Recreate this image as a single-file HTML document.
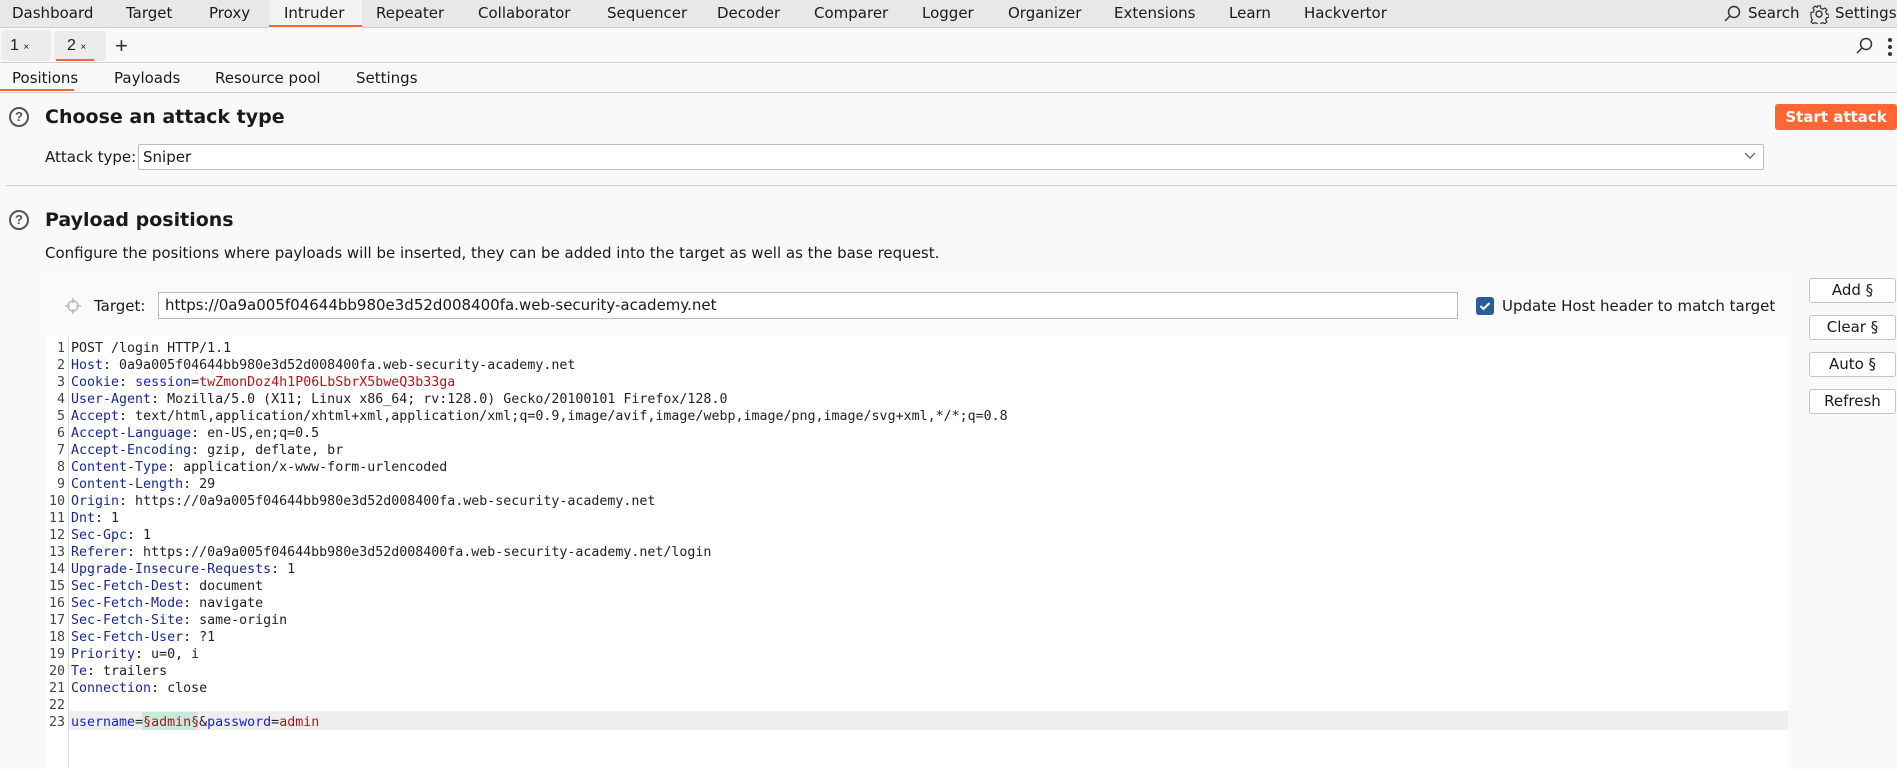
<!DOCTYPE html>
<html><head><style>
*{margin:0;padding:0;box-sizing:border-box}
body{width:1897px;height:769px;overflow:hidden;background:#f9f9f9;font-family:"Liberation Sans","DejaVu Sans",sans-serif;color:#1a1a1a;position:relative}
.abs{position:absolute;white-space:nowrap}
#nav{position:absolute;left:0;top:0;width:1897px;height:28px;background:#e8e8e8;border-bottom:1px solid #cfcfcf}
#nav span{position:absolute;top:4px;font-family:"DejaVu Sans","Liberation Sans",sans-serif;font-size:15px;z-index:2}
.mono{font-family:"DejaVu Sans Mono","Liberation Mono",monospace;font-size:13.3px}
.k{color:#1c2a8c}.b{color:#1a1ae6}.r{color:#b2151f}
.btn{position:absolute;left:1809px;width:87px;height:25px;border:1px solid #c4c4c4;border-radius:3px;background:#fff;font-size:15px;text-align:center;line-height:23px;font-family:"DejaVu Sans",sans-serif}
.help{position:absolute;width:20px;height:20px;border:2px solid #555;border-radius:50%;font-size:13px;font-weight:bold;text-align:center;line-height:16px;color:#555}
</style></head><body>
<div id="nav">
<div style="position:absolute;left:269px;top:0;width:93px;height:28px;background:#f2f2f2"></div>
<div style="position:absolute;left:269px;top:25px;width:93px;height:2px;background:#f06a35"></div>
<span style="left:12px">Dashboard</span><span style="left:126px">Target</span><span style="left:209px">Proxy</span><span style="left:284px">Intruder</span><span style="left:376px">Repeater</span><span style="left:478px">Collaborator</span><span style="left:607px">Sequencer</span><span style="left:717px">Decoder</span><span style="left:814px">Comparer</span><span style="left:922px">Logger</span><span style="left:1008px">Organizer</span><span style="left:1114px">Extensions</span><span style="left:1229px">Learn</span><span style="left:1304px">Hackvertor</span>
<span style="left:1748px">Search</span><span style="left:1835px">Settings</span>
<svg style="position:absolute;left:1723px;top:5px" width="18" height="18" viewBox="0 0 18 18"><circle cx="11" cy="7" r="5.5" fill="none" stroke="#333" stroke-width="1.5"/><path d="M7 11L2 16" stroke="#333" stroke-width="1.5"/></svg>
<svg style="position:absolute;left:1809px;top:4px" width="20" height="20" viewBox="0 0 20 20"><circle cx="10" cy="10" r="3" fill="none" stroke="#333" stroke-width="1.4"/><path d="M8.5 1.5h3l.5 2.5 2 1 2.3-1.3 2 2-1.3 2.3 1 2 2.5.5v3l-2.5.5-1 2 1.3 2.3-2 2-2.3-1.3-2 1-.5 2.5h-3l-.5-2.5-2-1-2.3 1.3-2-2 1.3-2.3-1-2L1.5 11.5v-3L4 8l1-2L3.7 3.7l2-2L8 3l.5-1.5z" fill="none" stroke="#333" stroke-width="1.3" transform="scale(.95) translate(.5 .5)"/></svg>
</div>
<span class="abs" style="left:1px;top:30px;width:50px;height:31px;background:#ececec;border-radius:3px"></span>
<span class="abs" style="left:10px;top:37px;font-size:16px">1 <small style="font-size:10px">×</small></span>
<span class="abs" style="left:54px;top:31px;width:52px;height:30px;background:#ececec;border-radius:3px"></span>
<span class="abs" style="left:67px;top:37px;font-size:16px">2 <small style="font-size:10px">×</small></span>
<span class="abs" style="left:56px;top:59px;width:38px;height:2px;background:#f06a35"></span>
<span class="abs" style="left:115px;top:33px;font-size:22px;color:#333">+</span>
<svg style="position:absolute;left:1855px;top:37px" width="18" height="18" viewBox="0 0 18 18"><circle cx="11" cy="7" r="5.5" fill="none" stroke="#333" stroke-width="1.5"/><path d="M7 11L2 16" stroke="#333" stroke-width="1.5"/></svg>
<span class="abs" style="left:1888px;top:38px;width:4px;height:4px;border-radius:50%;background:#333"></span>
<span class="abs" style="left:1888px;top:45px;width:4px;height:4px;border-radius:50%;background:#333"></span>
<span class="abs" style="left:1888px;top:52px;width:4px;height:4px;border-radius:50%;background:#333"></span>
<div class="abs" style="left:0;top:62px;width:1897px;height:1px;background:#d0d0d0"></div>
<span class="abs" style="left:12px;top:69px;font-family:'DejaVu Sans',sans-serif;font-size:15px">Positions</span>
<span class="abs" style="left:114px;top:69px;font-family:'DejaVu Sans',sans-serif;font-size:15px">Payloads</span>
<span class="abs" style="left:215px;top:69px;font-family:'DejaVu Sans',sans-serif;font-size:15px">Resource pool</span>
<span class="abs" style="left:356px;top:69px;font-family:'DejaVu Sans',sans-serif;font-size:15px">Settings</span>
<div class="abs" style="left:0;top:89px;width:74px;height:2px;background:#f06a35"></div>
<div class="abs" style="left:0;top:92px;width:1897px;height:1px;background:#d0d0d0"></div>
<div class="help" style="left:9px;top:107px">?</div>
<span class="abs" style="left:45px;top:106px;font-size:19px;font-weight:bold;font-family:'DejaVu Sans',sans-serif">Choose an attack type</span>
<div class="abs" style="left:1775px;top:104px;width:122px;height:26px;background:#ff6633;border-radius:3px;color:#fff;font-weight:bold;font-size:15px;text-align:center;line-height:26px;font-family:'DejaVu Sans',sans-serif">Start attack</div>
<span class="abs" style="left:45px;top:148px;font-size:15px;font-family:'DejaVu Sans',sans-serif">Attack type:</span>
<div class="abs" style="left:138px;top:144px;width:1626px;height:26px;background:#fff;border:1px solid #bbb;border-radius:2px;font-size:15px;line-height:24px;padding-left:4px;font-family:'DejaVu Sans',sans-serif">Sniper</div>
<svg style="position:absolute;left:1744px;top:152px" width="12" height="8"><path d="M1 1l5 5 5-5" fill="none" stroke="#555" stroke-width="1.2"/></svg>
<div class="abs" style="left:6px;top:185px;width:1891px;height:1px;background:#cfcfcf"></div>
<div class="help" style="left:9px;top:210px">?</div>
<span class="abs" style="left:45px;top:209px;font-size:19px;font-weight:bold;font-family:'DejaVu Sans',sans-serif">Payload positions</span>
<span class="abs" style="left:45px;top:244px;font-size:15px;font-family:'DejaVu Sans',sans-serif">Configure the positions where payloads will be inserted, they can be added into the target as well as the base request.</span>
<div class="abs" style="left:45px;top:277px;width:1743px;height:492px;background:#fff"></div>
<div class="abs" style="left:45px;top:277px;width:1743px;height:58px;background:#fafafa"></div>
<svg style="position:absolute;left:65px;top:298px" width="16" height="16"><circle cx="8" cy="8" r="5" fill="none" stroke="#bbb" stroke-width="1.5"/><path d="M8 0v5M8 11v5M0 8h5M11 8h5" stroke="#bbb" stroke-width="1.5"/></svg>
<span class="abs" style="left:94px;top:297px;font-family:'DejaVu Sans',sans-serif;font-size:15px">Target:</span>
<div class="abs" style="left:158px;top:292px;width:1300px;height:27px;background:#fff;border:1px solid #bbb;font-size:15px;line-height:25px;padding-left:6px;font-family:'DejaVu Sans',sans-serif">https://0a9a005f04644bb980e3d52d008400fa.web-security-academy.net</div>
<div class="abs" style="left:1476px;top:297px;width:18px;height:18px;background:#2b5e99;border-radius:3px"><svg width="18" height="18"><path d="M4.5 9l3 3 6-6" fill="none" stroke="#fff" stroke-width="2"/></svg></div>
<span class="abs" style="left:1502px;top:297px;font-size:15px;font-family:'DejaVu Sans',sans-serif">Update Host header to match target</span>
<div class="btn" style="top:278px">Add §</div>
<div class="btn" style="top:315px">Clear §</div>
<div class="btn" style="top:352px">Auto §</div>
<div class="btn" style="top:389px">Refresh</div>
<div class="abs" style="left:68px;top:337px;width:1px;height:432px;background:#ddd"></div>
<div class="abs" style="left:69px;top:711px;width:1719px;height:19px;background:#efefef"></div>
<div class="abs" style="left:142px;top:712px;width:56px;height:18px;background:#c6eadb"></div>
<div class="abs mono" style="left:45px;top:340px;width:20px;text-align:right;line-height:17px;color:#444">1<br>2<br>3<br>4<br>5<br>6<br>7<br>8<br>9<br>10<br>11<br>12<br>13<br>14<br>15<br>16<br>17<br>18<br>19<br>20<br>21<br>22<br>23</div>
<div class="abs mono" style="left:71px;top:340px;line-height:17px;color:#222">POST /login HTTP/1.1<br>
<span class="k">Host</span>: 0a9a005f04644bb980e3d52d008400fa.web-security-academy.net<br>
<span class="k">Cookie</span>: <span class="b">session</span>=<span class="r">twZmonDoz4h1P06LbSbrX5bweQ3b33ga</span><br>
<span class="k">User-Agent</span>: Mozilla/5.0 (X11; Linux x86_64; rv:128.0) Gecko/20100101 Firefox/128.0<br>
<span class="k">Accept</span>: text/html,application/xhtml+xml,application/xml;q=0.9,image/avif,image/webp,image/png,image/svg+xml,*/*;q=0.8<br>
<span class="k">Accept-Language</span>: en-US,en;q=0.5<br>
<span class="k">Accept-Encoding</span>: gzip, deflate, br<br>
<span class="k">Content-Type</span>: application/x-www-form-urlencoded<br>
<span class="k">Content-Length</span>: 29<br>
<span class="k">Origin</span>: https://0a9a005f04644bb980e3d52d008400fa.web-security-academy.net<br>
<span class="k">Dnt</span>: 1<br>
<span class="k">Sec-Gpc</span>: 1<br>
<span class="k">Referer</span>: https://0a9a005f04644bb980e3d52d008400fa.web-security-academy.net/login<br>
<span class="k">Upgrade-Insecure-Requests</span>: 1<br>
<span class="k">Sec-Fetch-Dest</span>: document<br>
<span class="k">Sec-Fetch-Mode</span>: navigate<br>
<span class="k">Sec-Fetch-Site</span>: same-origin<br>
<span class="k">Sec-Fetch-User</span>: ?1<br>
<span class="k">Priority</span>: u=0, i<br>
<span class="k">Te</span>: trailers<br>
<span class="k">Connection</span>: close<br>
&nbsp;<br>
<span class="b">username</span>=<span class="r">§admin§</span>&amp;<span class="b">password</span>=<span class="r">admin</span></div>
</body></html>
